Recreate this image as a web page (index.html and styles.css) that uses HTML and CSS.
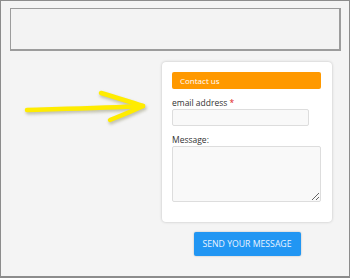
FILE: index.html
```html
<!DOCTYPE html>
<html lang="en">
  <head>
    <meta charset="UTF-8" />
    <title>Contact form</title>
    <link rel="stylesheet" href="styles.css">
  </head>
  <body>
    <div class="frame">
      <div class="banner"></div>

      <div class="main">
        <div class="pointer">
          <svg width="140" height="50" viewBox="0 0 140 50">
            <defs>
              <filter id="soft" x="-10%" y="-30%" width="120%" height="160%">
                <feGaussianBlur stdDeviation="1.6" />
              </filter>
            </defs>
            <g fill="none" stroke="#9a9a7a" stroke-width="5" stroke-linecap="round"
               stroke-linejoin="round" opacity="0.55" filter="url(#soft)">
              <path d="M14 27 C45 26 90 25 130 23" />
              <path d="M88 10 C104 15 118 19 130 23 C120 28 107 33 97 37" />
            </g>
            <g fill="none" stroke="#ffec00" stroke-width="4.5" stroke-linecap="round"
               stroke-linejoin="round">
              <path d="M13 25 C45 24 90 23 129 21" />
              <path d="M87 8 C103 13 117 17 129 21 C119 26 106 31 96 35" />
            </g>
          </svg>
        </div>

        <div class="side">
          <form class="card">
            <div class="card-title">Contact us</div>

            <label class="field-label">email address <span class="req">*</span></label>
            <input class="text-input" type="text" />

            <label class="field-label">Message:</label>
            <textarea class="text-area"></textarea>
          </form>

          <button class="send-button" type="button">SEND YOUR MESSAGE</button>
        </div>
      </div>
    </div>
  </body>
</html>
```

FILE: styles.css
```css
* {
  margin: 0;
  padding: 0;
  box-sizing: border-box;
}

body {
  font-family: "Open Sans", "DejaVu Sans", sans-serif;
  background-color: #ffffff;
}

.frame {
  width: 350px;
  height: 278px;
  border: 1px solid #8c8c8c;
  border-bottom-width: 2px;
  background-color: #f4f4f4;
  padding: 7px 8px 0 9px;
}

.banner {
  height: 43px;
  border: 1px solid #9c9c9c;
  border-right-width: 2px;
  border-bottom-width: 2px;
  background-color: #f3f3f3;
}

.main {
  display: flex;
  margin-top: 11px;
}

.pointer {
  width: 152px;
  padding: 23px 0 0 4px;
}

.pointer svg {
  display: block;
}

.side {
  display: flex;
  flex-direction: column;
  align-items: center;
  width: 170px;
}

.card {
  width: 170px;
  background-color: #ffffff;
  border-radius: 4px;
  box-shadow: 0 0 3px rgba(0, 0, 0, 0.22);
  padding: 10px 10px 20px 10px;
  display: flex;
  flex-direction: column;
  align-items: flex-start;
}

.card-title {
  width: 149px;
  height: 17px;
  background-color: #ff9900;
  border-radius: 2px;
  color: #ffffff;
  font-size: 8px;
  line-height: 17px;
  padding-left: 8px;
}

.field-label {
  font-size: 8.5px;
  color: #333333;
  line-height: 11px;
  margin-top: 8px;
  margin-bottom: 1px;
}

.req {
  color: #e02020;
}

.text-input {
  display: block;
  width: 137px;
  height: 17px;
  background-color: #f9f9f9;
  border: 1px solid #dddddd;
  border-radius: 2px;
  outline: none;
}

.text-area {
  display: block;
  width: 149px;
  height: 56px;
  background-color: #f9f9f9;
  border: 1px solid #dddddd;
  border-radius: 2px;
  outline: none;
  resize: both;
  font-family: inherit;
}

.send-button {
  margin-top: 10px;
  width: 107px;
  height: 24px;
  background-color: #2196f3;
  border: none;
  border-radius: 2px;
  box-shadow: 0 0 2px rgba(0, 0, 0, 0.25);
  color: #e9f4ff;
  font-family: inherit;
  font-size: 8.7px;
  cursor: pointer;
}
```
